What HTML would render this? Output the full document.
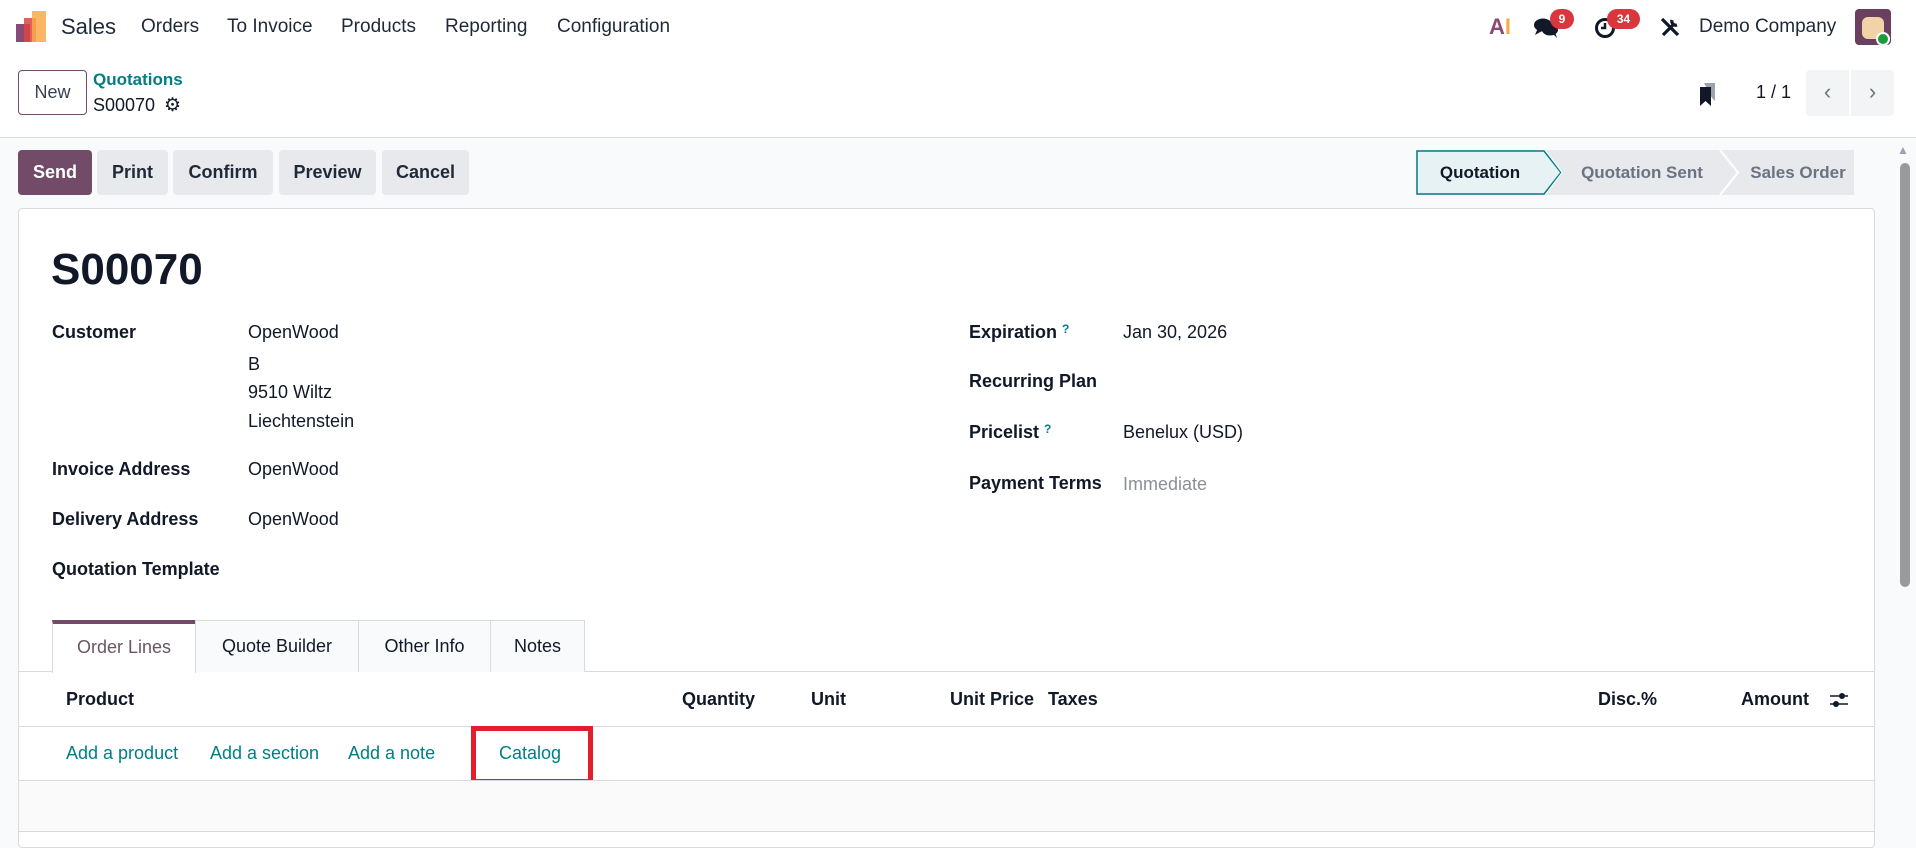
<!DOCTYPE html>
<html><head><meta charset="utf-8"><style>
*{box-sizing:border-box;margin:0;padding:0}
body{width:1916px;height:834px;overflow:hidden;background:#f9fafb;font-family:"Liberation Sans",sans-serif;color:#111827;position:relative;font-size:17.5px}
.a{position:absolute;white-space:nowrap}
.nav{position:absolute;left:0;top:0;width:1916px;height:56px;background:#fff}
.cp{position:absolute;left:0;top:56px;width:1916px;height:82px;background:#fff;border-bottom:1px solid #d8dadd}
.btn{position:absolute;top:150px;height:45px;border-radius:4px;background:#e7e9ed;font-weight:bold;font-size:18px;line-height:45px;text-align:center;color:#1f2937}
.card{position:absolute;left:18px;top:208px;width:1857px;height:640px;background:#fff;border:1px solid #d8dadd;border-radius:4px}
.lbl{position:absolute;font-weight:bold;font-size:18px;color:#111827;white-space:nowrap}
.val{position:absolute;font-size:18px;color:#111827;white-space:nowrap}
.q{color:#017e84;font-size:12px;vertical-align:top;margin-left:5px;font-weight:bold}
.tab{position:absolute;top:620px;height:52px;border:1px solid #d8dadd;border-bottom:none;background:#f9fafb;font-size:18px;line-height:50px;text-align:center;color:#111827}
.th{position:absolute;top:689px;font-weight:bold;font-size:18px;white-space:nowrap}
.lk{position:absolute;top:743px;color:#017e84;font-size:18px;white-space:nowrap}
.hl{position:absolute;left:19px;width:1855px;height:1px;background:#d8dadd}
.badge{position:absolute;background:#d9363e;color:#fff;font-size:12px;font-weight:bold;border-radius:10px;height:20px;line-height:20px;text-align:center}
</style></head><body>
<div class="nav">
  <div class="a" style="left:16px;top:24px;width:14px;height:18px;background:#8a4a78"></div>
  <div class="a" style="left:24px;top:18px;width:12px;height:24px;background:#e0443e;opacity:.85"></div>
  <div class="a" style="left:32px;top:11px;width:14px;height:31px;background:#f9a94a;opacity:.85"></div>
  <div class="a" style="left:61px;top:14px;font-size:22px;color:#1f2937">Sales</div>
  <div class="a" style="left:141px;top:16px;font-size:19px;color:#1f2937">Orders</div>
  <div class="a" style="left:227px;top:16px;font-size:19px;color:#1f2937">To Invoice</div>
  <div class="a" style="left:341px;top:16px;font-size:19px;color:#1f2937">Products</div>
  <div class="a" style="left:445px;top:16px;font-size:19px;color:#1f2937">Reporting</div>
  <div class="a" style="left:557px;top:16px;font-size:19px;color:#1f2937">Configuration</div>
  <div class="a" style="left:1489px;top:14px;font-size:22px;font-weight:bold;color:#8a4a78">A<span style="color:#f9a94a">I</span></div>
  <svg class="a" style="left:1533px;top:17px" width="26" height="22" viewBox="0 0 26 22"><ellipse cx="10" cy="8" rx="9" ry="6.5" fill="#111827"/><path d="M4 13 L2 18 L9 14Z" fill="#111827"/><ellipse cx="17" cy="13" rx="8" ry="5.5" fill="#111827"/><path d="M20 17 L24 21 L22 15Z" fill="#111827"/></svg>
  <div class="badge" style="left:1550px;top:9px;width:24px">9</div>
  <svg class="a" style="left:1594px;top:17px" width="22" height="22" viewBox="0 0 22 22"><circle cx="11" cy="11" r="8.5" fill="none" stroke="#111827" stroke-width="3"/><path d="M11 6v5h-4" stroke="#111827" stroke-width="2.5" fill="none"/></svg>
  <div class="badge" style="left:1607px;top:9px;width:33px">34</div>
  <svg class="a" style="left:1659px;top:16px" width="22" height="22" viewBox="0 0 22 22"><path d="M3 3 L19 19 M4 19 L14 9 M13 4 a4 4 0 0 0 5 5" stroke="#111827" stroke-width="3.2" fill="none"/></svg>
  <div class="a" style="left:1699px;top:16px;font-size:19px;color:#1f2937">Demo Company</div>
  <div class="a" style="left:1855px;top:9px;width:36px;height:36px;border-radius:4px;background:#6b3f5f"></div>
  <div class="a" style="left:1862px;top:17px;width:22px;height:22px;border-radius:6px;background:#f2d3a8"></div>
  <div class="a" style="left:1876px;top:32px;width:14px;height:14px;border-radius:50%;background:#1a9c3a;border:2px solid #fff"></div>
</div>
<div class="cp">
  <div class="a" style="left:18px;top:14px;width:69px;height:45px;border:1px solid #714b67;border-radius:4px;text-align:center;line-height:43px;font-size:18px;color:#374151">New</div>
  <div class="a" style="left:93px;top:14px;font-size:17px;font-weight:bold;color:#017e84">Quotations</div>
  <div class="a" style="left:93px;top:39px;font-size:18px;color:#111827">S00070</div>
  <div class="a" style="left:164px;top:38px;font-size:19px;color:#111827">⚙</div>
  <svg class="a" style="left:1698px;top:25px" width="20" height="26" viewBox="0 0 20 26"><path d="M6 2h11v18l-3-3z" fill="#9ca3af"/><path d="M2 6h11v19l-5.5-5L2 25z" fill="#111827"/></svg>
  <div class="a" style="left:1756px;top:26px;font-size:18px">1 / 1</div>
  <div class="a" style="left:1806px;top:14px;width:43px;height:46px;background:#f3f4f6;border-radius:4px 0 0 4px;text-align:center;line-height:44px;color:#6b7280;font-size:22px">‹</div>
  <div class="a" style="left:1851px;top:14px;width:43px;height:46px;background:#f3f4f6;border-radius:0 4px 4px 0;text-align:center;line-height:44px;color:#6b7280;font-size:22px">›</div>
</div>
<div class="btn" style="left:18px;width:74px;background:#714b67;color:#fff">Send</div>
<div class="btn" style="left:97px;width:71px">Print</div>
<div class="btn" style="left:173px;width:100px">Confirm</div>
<div class="btn" style="left:279px;width:97px">Preview</div>
<div class="btn" style="left:382px;width:87px">Cancel</div>
<svg class="a" style="left:1416px;top:150px" width="440" height="45" viewBox="0 0 440 45">
  <path d="M0 0H438V45H0Z" fill="#e7e9ed"/>
  <path d="M1 1H128L145 22.5L128 44H1Z" fill="#e6f2f3" stroke="#017e84" stroke-width="1.5"/>
  <path d="M129 0L146 22.5L129 45" fill="none" stroke="#fff" stroke-width="1"/>
  <path d="M304 0L322 22.5L304 45" fill="none" stroke="#fff" stroke-width="2"/>
  <text x="64" y="28" text-anchor="middle" font-family="Liberation Sans" font-weight="bold" font-size="17" fill="#111827">Quotation</text>
  <text x="226" y="28" text-anchor="middle" font-family="Liberation Sans" font-weight="bold" font-size="17" fill="#6b7280">Quotation Sent</text>
  <text x="382" y="28" text-anchor="middle" font-family="Liberation Sans" font-weight="bold" font-size="17" fill="#6b7280">Sales Order</text>
</svg>
<div class="a" style="left:1897px;top:143px;font-size:12px;color:#9ca3af">▲</div>
<div class="a" style="left:1900px;top:163px;width:10px;height:424px;background:#9a9a9a;border-radius:5px"></div>
<div class="card"></div>
<div class="a" style="left:51px;top:245px;font-size:44px;font-weight:bold;color:#111827">S00070</div>
<div class="lbl" style="left:52px;top:322px">Customer</div>
<div class="val" style="left:248px;top:322px">OpenWood</div>
<div class="val" style="left:248px;top:354px">B</div>
<div class="val" style="left:248px;top:382px">9510 Wiltz</div>
<div class="val" style="left:248px;top:411px">Liechtenstein</div>
<div class="lbl" style="left:52px;top:459px">Invoice Address</div>
<div class="val" style="left:248px;top:459px">OpenWood</div>
<div class="lbl" style="left:52px;top:509px">Delivery Address</div>
<div class="val" style="left:248px;top:509px">OpenWood</div>
<div class="lbl" style="left:52px;top:559px">Quotation Template</div>
<div class="lbl" style="left:969px;top:322px">Expiration<span class="q">?</span></div>
<div class="val" style="left:1123px;top:322px">Jan 30, 2026</div>
<div class="lbl" style="left:969px;top:371px">Recurring Plan</div>
<div class="lbl" style="left:969px;top:422px">Pricelist<span class="q">?</span></div>
<div class="val" style="left:1123px;top:422px">Benelux (USD)</div>
<div class="lbl" style="left:969px;top:473px">Payment Terms</div>
<div class="val" style="left:1123px;top:474px;color:#8b8f96">Immediate</div>
<div class="hl" style="top:671px"></div>
<div class="tab" style="left:52px;width:144px;background:#fff;border-top:4px solid #714b67;color:#6b5563;height:53px;line-height:47px">Order Lines</div>
<div class="tab" style="left:195px;width:164px">Quote Builder</div>
<div class="tab" style="left:358px;width:133px">Other Info</div>
<div class="tab" style="left:490px;width:95px">Notes</div>
<div class="th" style="left:66px">Product</div>
<div class="th" style="left:682px">Quantity</div>
<div class="th" style="left:811px">Unit</div>
<div class="th" style="left:950px">Unit Price</div>
<div class="th" style="left:1048px">Taxes</div>
<div class="th" style="left:1598px">Disc.%</div>
<div class="th" style="left:1741px">Amount</div>
<svg class="a" style="left:1829px;top:690px" width="20" height="20" viewBox="0 0 20 20"><path d="M1 6H19M1 14H19" stroke="#111827" stroke-width="1.6"/><circle cx="13" cy="6" r="3" fill="#111827"/><circle cx="7" cy="14" r="3" fill="#111827"/></svg>
<div class="hl" style="top:726px"></div>
<div class="lk" style="left:66px">Add a product</div>
<div class="lk" style="left:210px">Add a section</div>
<div class="lk" style="left:348px">Add a note</div>
<div class="lk" style="left:499px">Catalog</div>
<div class="a" style="left:471px;top:726px;width:122px;height:58px;border:5px solid #e41e2b"></div>
<div class="hl" style="top:780px"></div>
<div class="a" style="left:19px;top:781px;width:1855px;height:50px;background:#fafafa"></div>
<div class="hl" style="top:831px"></div>
</body></html>
